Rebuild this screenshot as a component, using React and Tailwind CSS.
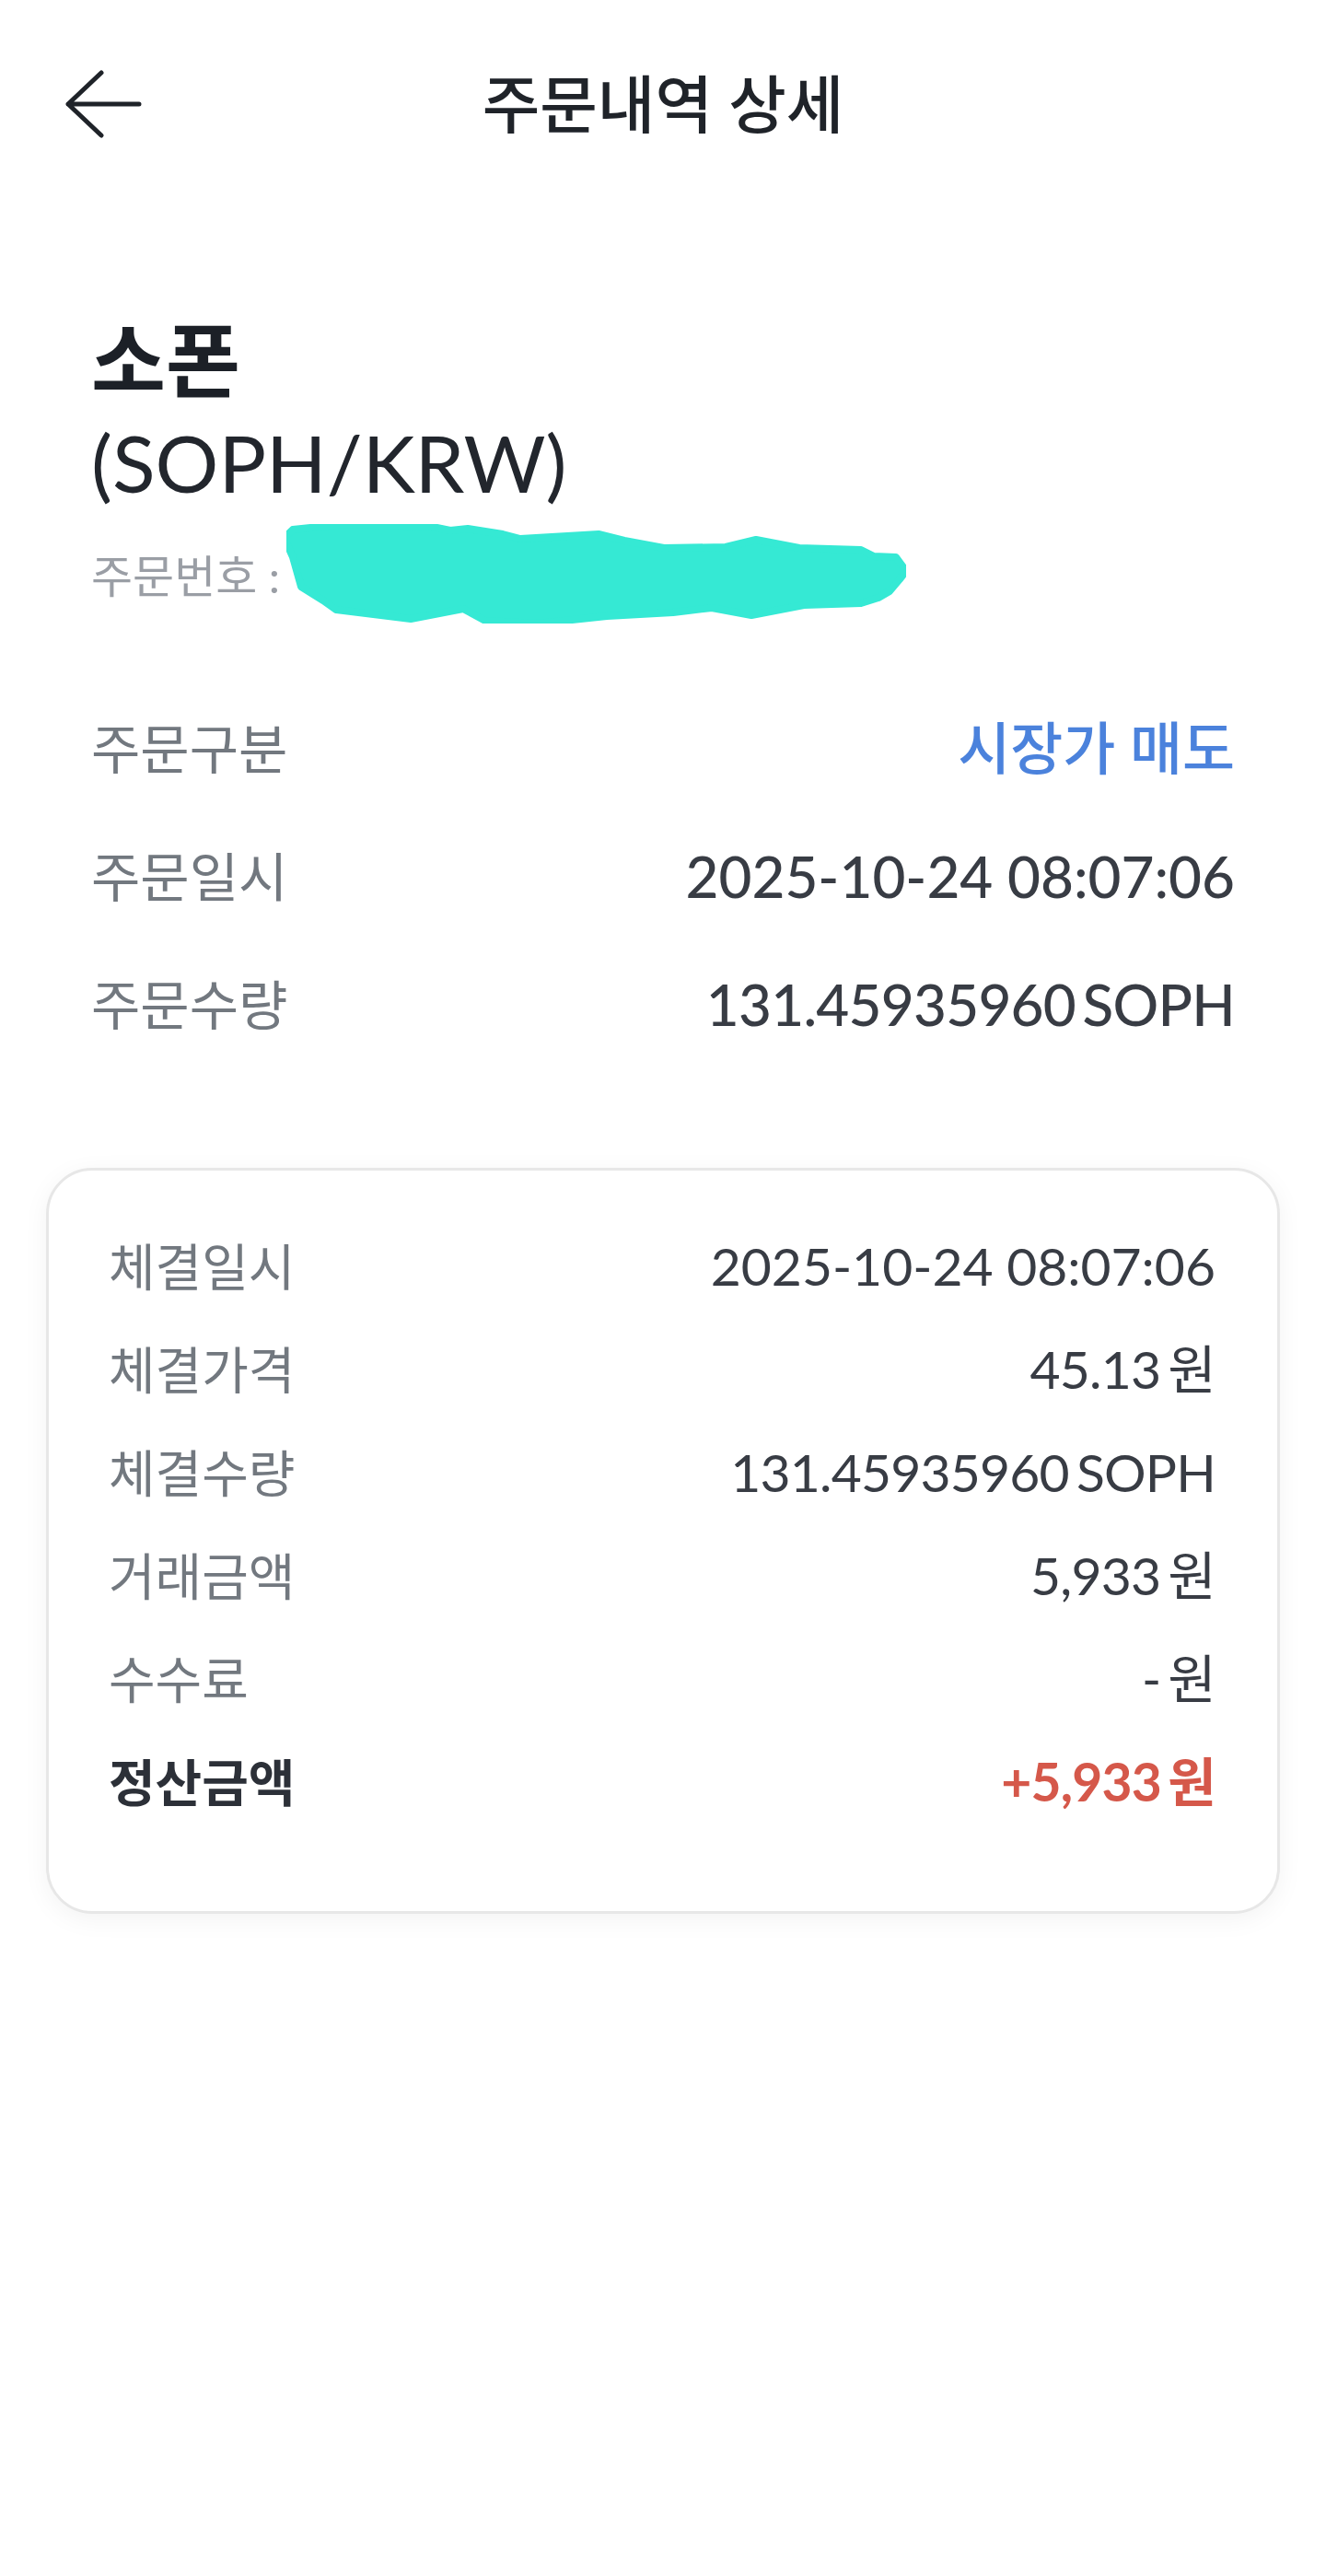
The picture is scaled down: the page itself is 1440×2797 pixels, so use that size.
import React from 'react';

const font = "font-['Lato','Noto_Sans_CJK_KR',sans-serif]";

const orderRows = [
    { label: '주문구분', value: '시장가 매도', tone: 'blue' },
    { label: '주문일시', value: '2025-10-24 08:07:06' },
    { label: '주문수량', value: '131.45935960 SOPH', tight: true },
];

const fillRows = [
    { label: '체결일시', value: '2025-10-24 08:07:06' },
    { label: '체결가격', value: '45.13 원', tight: true },
    { label: '체결수량', value: '131.45935960 SOPH', tight: true },
    { label: '거래금액', value: '5,933 원', tight: true },
    { label: '수수료', value: '- 원', tight: true },
    { label: '정산금액', value: '+5,933 원', strong: true, tight: true },
];

// 주문번호 가림 낙서
const Scribble = () => (
    <svg viewBox="0 0 673 108" className="absolute left-[212px] top-[-26px] w-[673px] h-[108px]">
        <path
            d="M0 13 L7 6 L64 0 L159 3 L178 7 L197 5 L235 11 L254 16 L339 11 L367 18 L410 26 L477 25 L510 17 L557 26 L624 28 L638 35 L662 36 L673 51 L666 60 L655 73 L643 80 L624 86 L562 88 L505 99 L462 91 L420 96 L348 100 L273 108 L216 105 L192 92 L135 103 L54 93 L40 83 L16 68 L7 36 L0 20 Z"
            fill="#35e9d4"
            stroke="#35e9d4"
            strokeWidth="8"
            strokeLinejoin="round"
        />
    </svg>
);

const App = () => {
    return (
        <div className={`min-h-[2797px] bg-white ${font} text-[#1f2329]`}>
            {/* 헤더 */}
            <header className="h-[226px] grid grid-cols-[1fr_auto_1fr] items-center">
                <button className="pl-[70px] justify-self-start">
                    <svg viewBox="0 0 84 74" className="w-[84px] h-[74px]" fill="none" stroke="#1f2329" strokeWidth="5" strokeLinecap="round" strokeLinejoin="round">
                        <path d="M81 37 H4 M40 3 L4 37 L40 71" />
                    </svg>
                </button>
                <h1 className="text-[68px] leading-none font-medium text-[#1f2329]">주문내역 상세</h1>
                <div />
            </header>

            {/* 종목 */}
            <section className="px-[99px]">
                <h2 className="mt-[108px] text-[88px] leading-[112px] font-bold text-[#1c2027]">소폰</h2>
                <p className="text-[86px] leading-[112px] text-[#22262d]">(SOPH/KRW)</p>
                <div className="relative mt-[37px] text-[49px] leading-[60px] text-[#9a9ea5]">
                    주문번호 :
                    <Scribble />
                </div>

                <div className="mt-[88px]">
                    {orderRows.map((row) => (
                        <div key={row.label} className="h-[139px] flex items-center justify-between">
                            <span className="text-[58px] text-[#72787f]">{row.label}</span>
                            <span
                                className={`text-[62px] font-medium ${row.tight ? '[word-spacing:-0.12em] tracking-[-0.012em]' : ''} ${row.tone === 'blue' ? 'text-[#4b82dc]' : 'text-[#383c44]'}`}
                            >
                                {row.value}
                            </span>
                        </div>
                    ))}
                </div>
            </section>

            {/* 체결 내역 카드 */}
            <section className="mx-[50px] mt-[108px] rounded-[50px] border-[3px] border-[#e7e7e7] bg-white shadow-[0_6px_28px_rgba(0,0,0,0.05)] pl-[65px] pr-[67px] pt-[48px] pb-[84px]">
                {fillRows.map((row) => (
                    <div key={row.label} className="h-[112px] flex items-center justify-between">
                        <span className={`text-[55px] ${row.strong ? 'font-bold text-[#2c3038]' : 'text-[#72787f]'}`}>{row.label}</span>
                        <span
                            className={`text-[57px] ${row.tight ? '[word-spacing:-0.1em] tracking-[-0.014em]' : ''} ${row.strong ? 'font-bold text-[#d5584a]' : 'text-[#383c44]'}`}
                        >
                            {row.value}
                        </span>
                    </div>
                ))}
            </section>
        </div>
    );
};

export default App;
